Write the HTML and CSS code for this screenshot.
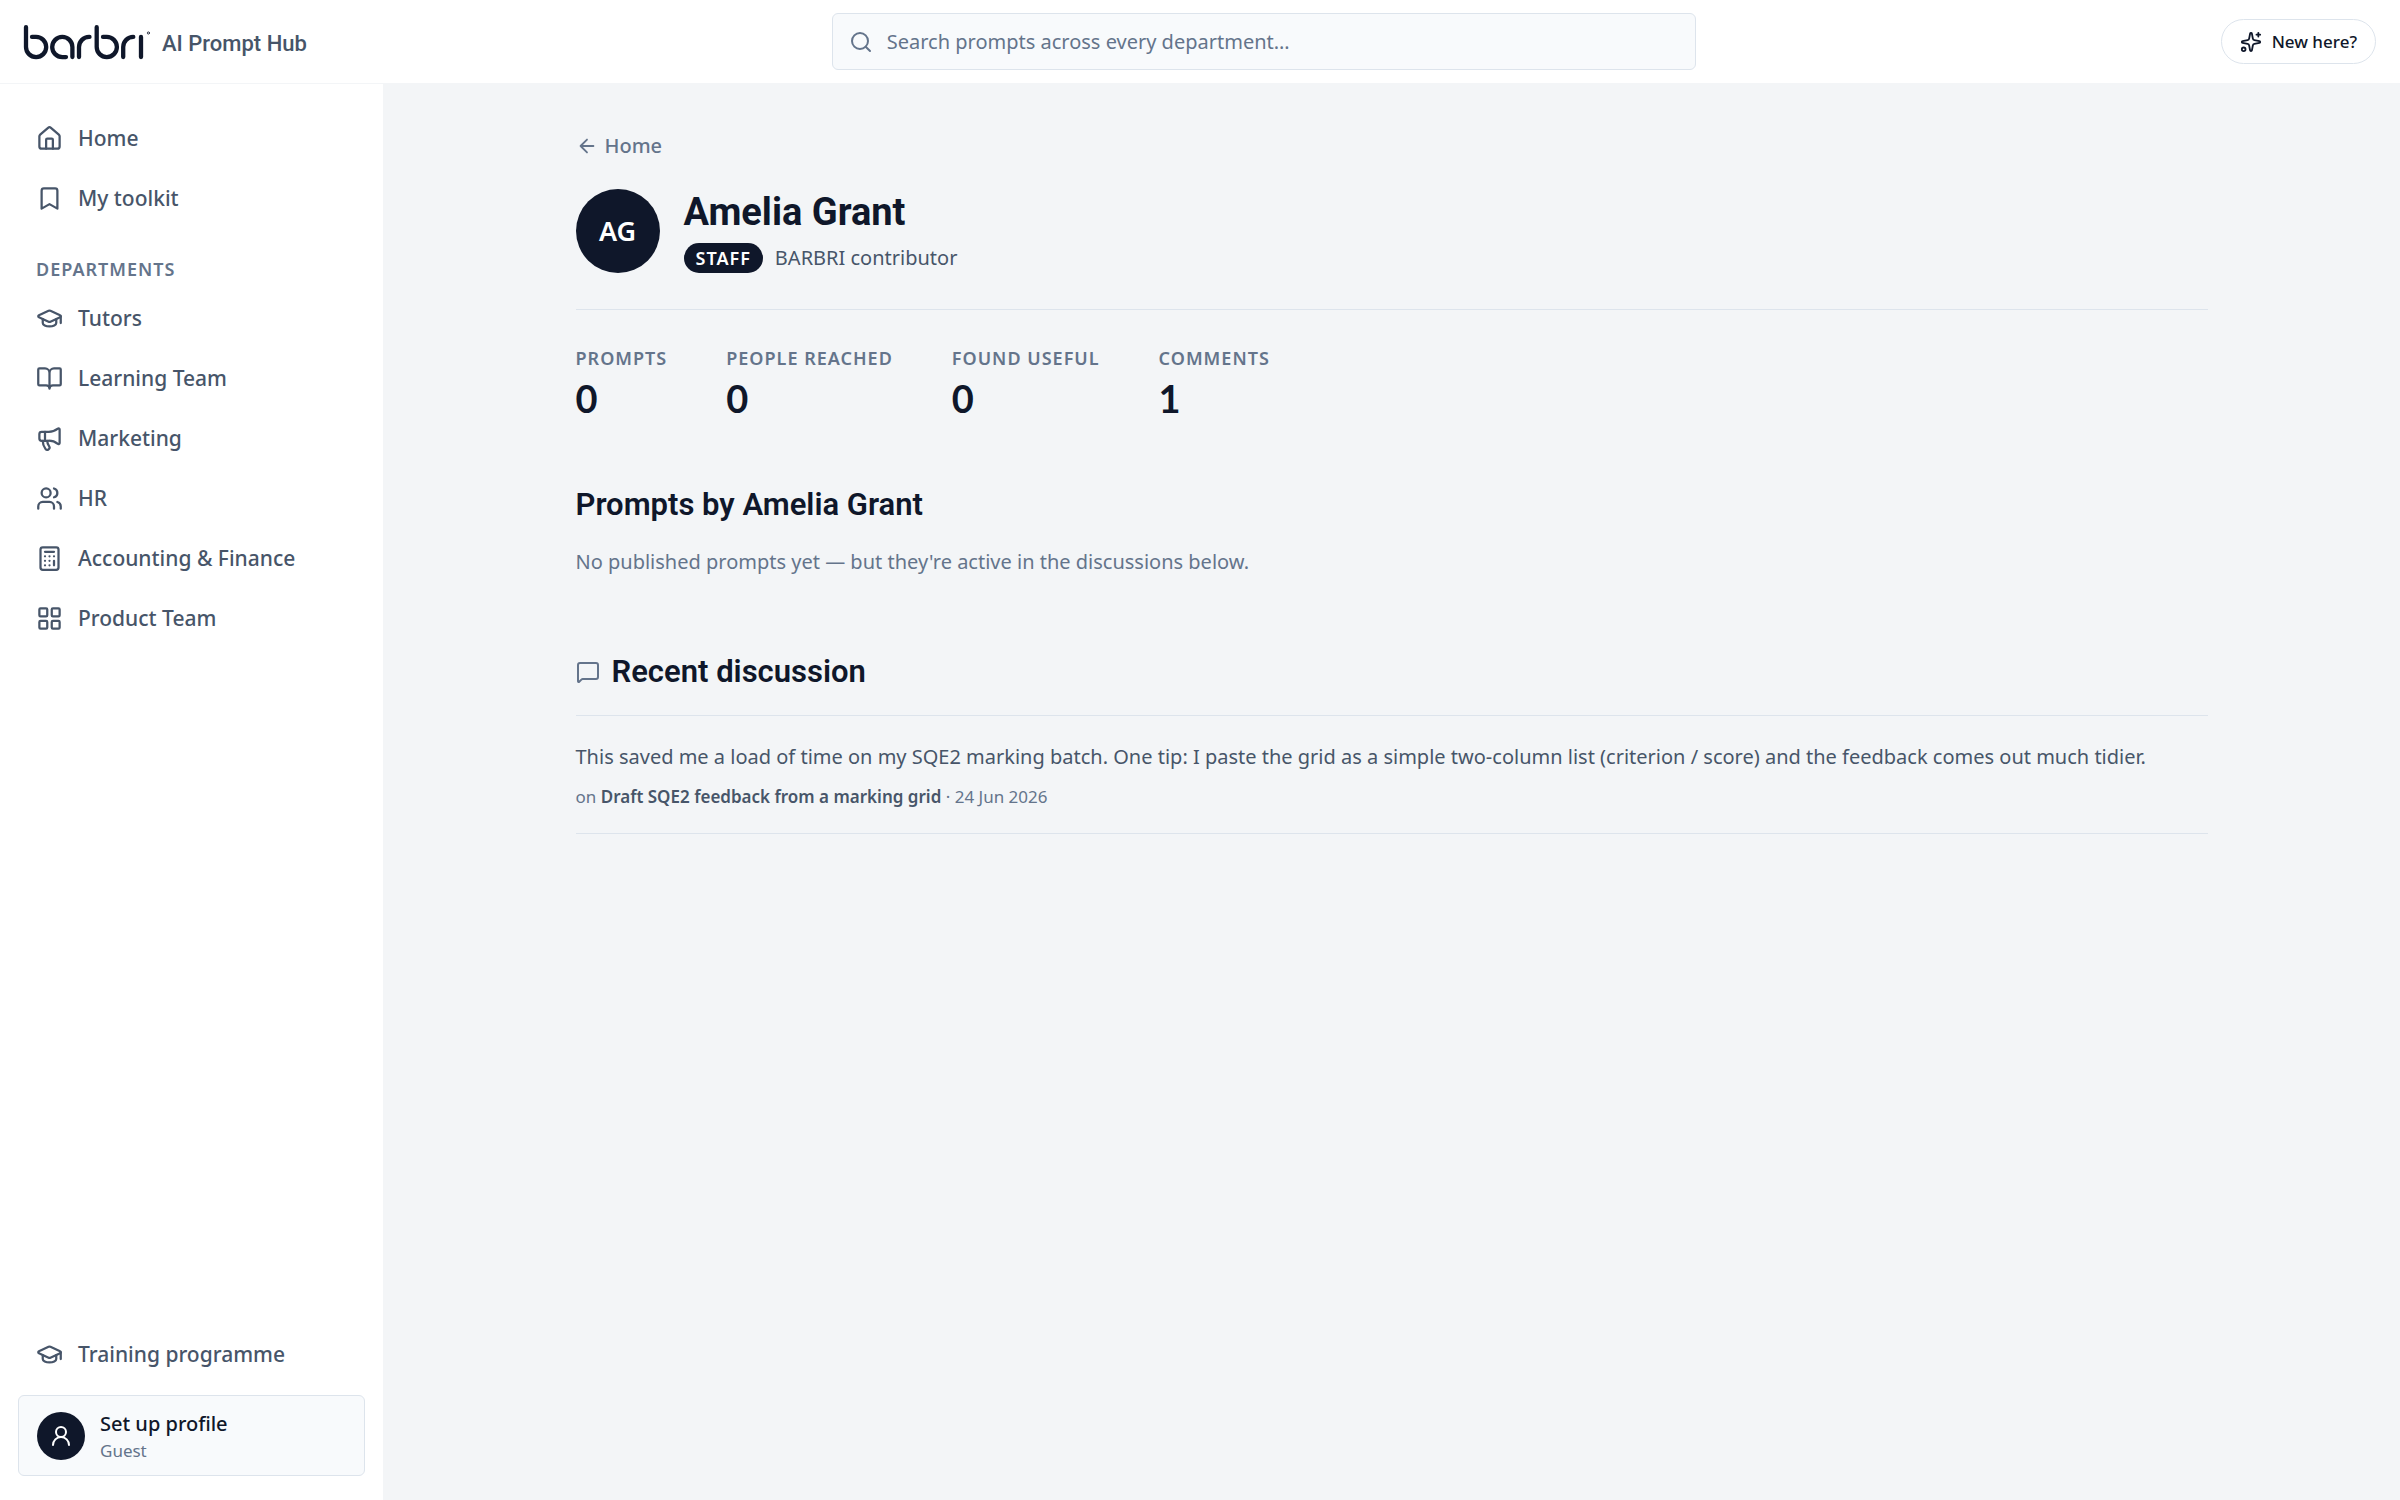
FILE: index.html
```html
<!DOCTYPE html>
<html lang="en">
<head>
<meta charset="utf-8">
<meta name="viewport" content="width=device-width, initial-scale=1">
<title>Amelia Grant · AI Prompt Hub</title>
<link rel="stylesheet" href="styles.css">
</head>
<body>
<header class="topbar">
  <a class="brand" href="#">
    <svg class="brand-logo" viewBox="0 0 128 38" fill="none" stroke="currentColor" stroke-width="4.3" stroke-linecap="round" role="img" aria-label="barbri">
      <path d="M4 4.2V24a10.1 10.1 0 1 0 10.1-10.1H10"/>
      <path d="M50.4 34V24a10.1 10.1 0 1 0-10.1 10.1H44"/>
      <path d="M57 34V24a10.1 10.1 0 0 1 10.1-10.1H67.5"/>
      <path d="M74.7 4.2V24a10.1 10.1 0 1 0 10.1-10.1H81"/>
      <path d="M101.2 34V24a10.1 10.1 0 0 1 10.1-10.1"/>
      <path d="M119 13.9V34"/>
      <circle cx="126.4" cy="10" r="1.1" stroke-width=".8"/>
    </svg>
    <span class="brand-name">AI Prompt Hub</span>
  </a>
  <form class="search" role="search">
    <label class="search-box">
      <svg class="icon icon-search" viewBox="0 0 24 24" aria-hidden="true"><circle cx="11" cy="11" r="8"/><path d="m21 21-4.3-4.3"/></svg>
      <input class="search-input" type="search" placeholder="Search prompts across every department…" aria-label="Search prompts">
    </label>
  </form>
  <button class="new-here" type="button">
    <svg class="icon icon-sm" viewBox="0 0 24 24" aria-hidden="true"><path d="M11.017 2.814a1 1 0 0 1 1.966 0l1.051 5.558a2 2 0 0 0 1.594 1.594l5.558 1.051a1 1 0 0 1 0 1.966l-5.558 1.051a2 2 0 0 0-1.594 1.594l-1.051 5.558a1 1 0 0 1-1.966 0l-1.051-5.558a2 2 0 0 0-1.594-1.594l-5.558-1.051a1 1 0 0 1 0-1.966l5.558-1.051a2 2 0 0 0 1.594-1.594z"/><path d="M20 2v4M22 4h-4"/><circle cx="4" cy="20" r="2"/></svg>
    New here?
  </button>
</header>

<div class="shell">
  <aside class="sidebar">
    <nav class="nav" aria-label="Main">
      <a class="nav-item" href="#"><svg class="icon" viewBox="0 0 24 24" aria-hidden="true"><path d="M15 21v-8a1 1 0 0 0-1-1h-4a1 1 0 0 0-1 1v8"/><path d="M3 10a2 2 0 0 1 .709-1.528l7-5.999a2 2 0 0 1 2.582 0l7 5.999A2 2 0 0 1 21 10v9a2 2 0 0 1-2 2H5a2 2 0 0 1-2-2z"/></svg>Home</a>
      <a class="nav-item" href="#"><svg class="icon" viewBox="0 0 24 24" aria-hidden="true"><path d="m19 21-7-4-7 4V5a2 2 0 0 1 2-2h10a2 2 0 0 1 2 2z"/></svg>My toolkit</a>
      <h2 class="nav-heading">DEPARTMENTS</h2>
      <a class="nav-item" href="#"><svg class="icon" viewBox="0 0 24 24" aria-hidden="true"><path d="M21.42 10.922a1 1 0 0 0-.019-1.838L12.83 5.18a2 2 0 0 0-1.66 0L2.6 9.08a1 1 0 0 0 0 1.832l8.57 3.908a2 2 0 0 0 1.66 0z"/><path d="M22 10v6M6 12.5V16a6 3 0 0 0 12 0v-3.5"/></svg>Tutors</a>
      <a class="nav-item" href="#"><svg class="icon" viewBox="0 0 24 24" aria-hidden="true"><path d="M12 7v14M3 18a1 1 0 0 1-1-1V4a1 1 0 0 1 1-1h5a4 4 0 0 1 4 4 4 4 0 0 1 4-4h5a1 1 0 0 1 1 1v13a1 1 0 0 1-1 1h-6a3 3 0 0 0-3 3 3 3 0 0 0-3-3z"/></svg>Learning Team</a>
      <a class="nav-item" href="#"><svg class="icon" viewBox="0 0 24 24" aria-hidden="true"><path d="M11 6a13 13 0 0 0 8.4-2.8A1 1 0 0 1 21 4v12a1 1 0 0 1-1.6.8A13 13 0 0 0 11 14H5a2 2 0 0 1-2-2V8a2 2 0 0 1 2-2z"/><path d="M6 14a12 12 0 0 0 2.4 7.2 2 2 0 0 0 3.2-2.4A8 8 0 0 1 10 14M8 6v8"/></svg>Marketing</a>
      <a class="nav-item" href="#"><svg class="icon" viewBox="0 0 24 24" aria-hidden="true"><path d="M16 21v-2a4 4 0 0 0-4-4H6a4 4 0 0 0-4 4v2M16 3.128a4 4 0 0 1 0 7.744M22 21v-2a4 4 0 0 0-3-3.87"/><circle cx="9" cy="7" r="4"/></svg>HR</a>
      <a class="nav-item" href="#"><svg class="icon" viewBox="0 0 24 24" aria-hidden="true"><rect x="4" y="2" width="16" height="20" rx="2"/><path d="M8 6h8M16 14v4M16 10h.01M12 10h.01M8 10h.01M12 14h.01M8 14h.01M12 18h.01M8 18h.01"/></svg>Accounting &amp; Finance</a>
      <a class="nav-item" href="#"><svg class="icon" viewBox="0 0 24 24" aria-hidden="true"><rect x="3" y="3" width="7" height="7" rx="1"/><rect x="14" y="3" width="7" height="7" rx="1"/><rect x="14" y="14" width="7" height="7" rx="1"/><rect x="3" y="14" width="7" height="7" rx="1"/></svg>Product Team</a>
    </nav>
    <div class="sidebar-foot">
      <a class="nav-item" href="#"><svg class="icon" viewBox="0 0 24 24" aria-hidden="true"><path d="M21.42 10.922a1 1 0 0 0-.019-1.838L12.83 5.18a2 2 0 0 0-1.66 0L2.6 9.08a1 1 0 0 0 0 1.832l8.57 3.908a2 2 0 0 0 1.66 0z"/><path d="M22 10v6M6 12.5V16a6 3 0 0 0 12 0v-3.5"/></svg>Training programme</a>
      <button class="profile-card" type="button">
        <span class="profile-avatar"><svg class="icon icon-user" viewBox="0 0 24 24" aria-hidden="true"><circle cx="12" cy="8" r="5"/><path d="M20 21a8 8 0 0 0-16 0"/></svg></span>
        <span class="profile-text">
          <span class="profile-name">Set up profile</span>
          <span class="profile-role">Guest</span>
        </span>
      </button>
    </div>
  </aside>

  <main class="main">
    <div class="page">
      <a class="back" href="#"><svg class="icon icon-sm" viewBox="0 0 24 24" aria-hidden="true"><path d="m12 19-7-7 7-7M19 12H5"/></svg>Home</a>

      <section class="person">
        <span class="person-avatar">AG</span>
        <div class="person-text">
          <h1 class="person-name">Amelia Grant</h1>
          <p class="person-meta"><span class="badge">STAFF</span>BARBRI contributor</p>
        </div>
      </section>

      <dl class="stats">
        <div class="stat"><dt class="stat-label">PROMPTS</dt><dd class="stat-value">0</dd></div>
        <div class="stat"><dt class="stat-label">PEOPLE REACHED</dt><dd class="stat-value">0</dd></div>
        <div class="stat"><dt class="stat-label">FOUND USEFUL</dt><dd class="stat-value">0</dd></div>
        <div class="stat"><dt class="stat-label">COMMENTS</dt><dd class="stat-value">1</dd></div>
      </dl>

      <section class="section">
        <h2 class="section-title">Prompts by Amelia Grant</h2>
        <p class="empty">No published prompts yet — but they're active in the discussions below.</p>
      </section>

      <section class="section">
        <h2 class="section-title"><svg class="icon icon-muted" viewBox="0 0 24 24" aria-hidden="true"><path d="M22 17a2 2 0 0 1-2 2H6.8a2 2 0 0 0-1.4.6l-2.2 2.2a.7.7 0 0 1-1.2-.5V5a2 2 0 0 1 2-2h16a2 2 0 0 1 2 2z"/></svg>Recent discussion</h2>
        <ul class="comments">
          <li class="comment">
            <p class="comment-body">This saved me a load of time on my SQE2 marking batch. One tip: I paste the grid as a simple two-column list (criterion / score) and the feedback comes out much tidier.</p>
            <p class="comment-meta">on <a class="comment-link" href="#">Draft SQE2 feedback from a marking grid</a> · 24 Jun 2026</p>
          </li>
        </ul>
      </section>
    </div>
  </main>
</div>
</body>
</html>
```
FILE: styles.css
```css
:root {
  --ink: #0f172a;
  --slate: #475569;
  --muted: #64748b;
  --line: #dde4ec;
  --soft: #f8fafc;
  --canvas: #f3f5f7;
  --font-body: "Noto Sans", "Open Sans", sans-serif;
  --font-head: Roboto, Inter, sans-serif;
}

* { box-sizing: border-box; }

body {
  display: flex;
  flex-direction: column;
  min-height: 100vh;
  margin: 0;
  background: var(--canvas);
  color: var(--ink);
  font: 400 20px/30px var(--font-body);
}

h1, h2, p, dl, dd, ul { margin: 0; padding: 0; }
ul { list-style: none; }
a { color: inherit; text-decoration: none; }
button { font: inherit; color: inherit; cursor: pointer; }

.icon {
  flex: none;
  width: 27px;
  height: 27px;
  fill: none;
  stroke: currentColor;
  stroke-width: 2;
  stroke-linecap: round;
  stroke-linejoin: round;
}
.icon-search { width: 24px; height: 24px; color: var(--muted); }
.icon-sm { width: 22px; height: 22px; }
.icon-user { width: 24px; height: 24px; }
.icon-muted { width: 24px; height: 24px; color: var(--muted); }

/* Top bar */
.topbar {
  display: flex;
  align-items: center;
  gap: 24px;
  height: 84px;
  padding: 0 24px;
  background: #fff;
  border-bottom: 1px solid var(--canvas);
}
.brand { display: flex; align-items: center; gap: 12px; }
.brand-logo { width: 128px; height: 38px; margin-left: -2px; }
.brand-name { padding-top: 3px; color: var(--slate); font: 500 22px/33px var(--font-head); }
.search { flex: 1; display: flex; justify-content: center; }
.search-box {
  display: flex;
  align-items: center;
  gap: 14px;
  width: 100%;
  max-width: 864px;
  height: 57px;
  padding: 0 16px;
  background: var(--soft);
  border: 1px solid var(--line);
  border-radius: 6px;
}
.search-input {
  flex: 1;
  min-width: 0;
  padding: 0;
  border: 0;
  outline: 0;
  background: transparent;
  color: var(--ink);
  font: inherit;
}
.search-input::placeholder { color: var(--muted); opacity: 1; }
.new-here {
  display: flex;
  align-items: center;
  gap: 10px;
  height: 45px;
  padding: 0 18px;
  background: #fff;
  border: 1px solid var(--line);
  border-radius: 24px;
  font-size: 17px;
  font-weight: 500;
}

/* Sidebar */
.shell { flex: 1; display: flex; }
.sidebar {
  flex: none;
  display: flex;
  flex-direction: column;
  justify-content: space-between;
  width: 383px;
  padding: 24px 18px;
  background: #fff;
}
.nav-item {
  display: flex;
  align-items: center;
  gap: 15px;
  height: 60px;
  padding: 0 18px;
  color: var(--slate);
  font-size: 21px;
  font-weight: 500;
}
.nav-heading {
  height: 60px;
  padding: 29px 18px 0;
  color: var(--muted);
  font-size: 18px;
  font-weight: 600;
  line-height: 24px;
  letter-spacing: 1px;
}
.sidebar-foot { display: flex; flex-direction: column; gap: 11px; }
.profile-card {
  display: flex;
  align-items: center;
  gap: 15px;
  height: 81px;
  padding: 0 18px;
  background: var(--soft);
  border: 1px solid var(--line);
  border-radius: 6px;
  text-align: left;
}
.profile-avatar {
  display: grid;
  place-items: center;
  width: 48px;
  height: 48px;
  border-radius: 50%;
  background: var(--ink);
  color: #fff;
}
.profile-text { display: flex; flex-direction: column; }
.profile-name { font-weight: 500; }
.profile-role { color: var(--muted); font-size: 17px; line-height: 24px; }

/* Profile page */
.main { flex: 1; min-width: 0; padding: 47px 48px; }
.page { max-width: 1632px; margin: 0 auto; }
.back {
  display: inline-flex;
  align-items: center;
  gap: 7px;
  color: var(--muted);
  font-weight: 500;
}
.person {
  display: flex;
  align-items: center;
  gap: 24px;
  margin-top: 23px;
  padding-bottom: 36px;
  border-bottom: 1px solid var(--line);
}
.person-avatar {
  display: grid;
  place-items: center;
  width: 84px;
  height: 84px;
  border-radius: 50%;
  background: var(--ink);
  color: #fff;
  font-size: 27px;
  font-weight: 600;
}
.person-name { font: 700 38px/48px var(--font-head); }
.person-meta { display: flex; align-items: center; gap: 12px; margin-top: 7px; color: var(--slate); }
.badge {
  padding: 0 12px;
  border-radius: 15px;
  background: var(--ink);
  color: #fff;
  font-size: 18px;
  font-weight: 600;
  letter-spacing: 1px;
}
.stats { display: flex; flex-wrap: wrap; gap: 59px; margin-top: 36px; }
.stat-label {
  color: var(--muted);
  font-size: 18px;
  font-weight: 600;
  line-height: 24px;
  letter-spacing: 1px;
}
.stat-value { margin-top: 4px; font: 700 38px/48px Lato, var(--font-body); }
.section { margin-top: 62px; }
.section-title {
  display: flex;
  align-items: center;
  gap: 12px;
  font: 600 31px/42px var(--font-head);
}
.empty { margin-top: 21px; padding-bottom: 12px; color: var(--muted); }
.comments { margin-top: 22px; border-top: 1px solid var(--line); }
.comment { padding: 24px 0; border-bottom: 1px solid var(--line); }
.comment-body { color: var(--slate); line-height: 34px; }
.comment-meta { margin-top: 11px; color: var(--muted); font-size: 17px; line-height: 24px; }
.comment-link { color: var(--slate); font-weight: 600; }
```
